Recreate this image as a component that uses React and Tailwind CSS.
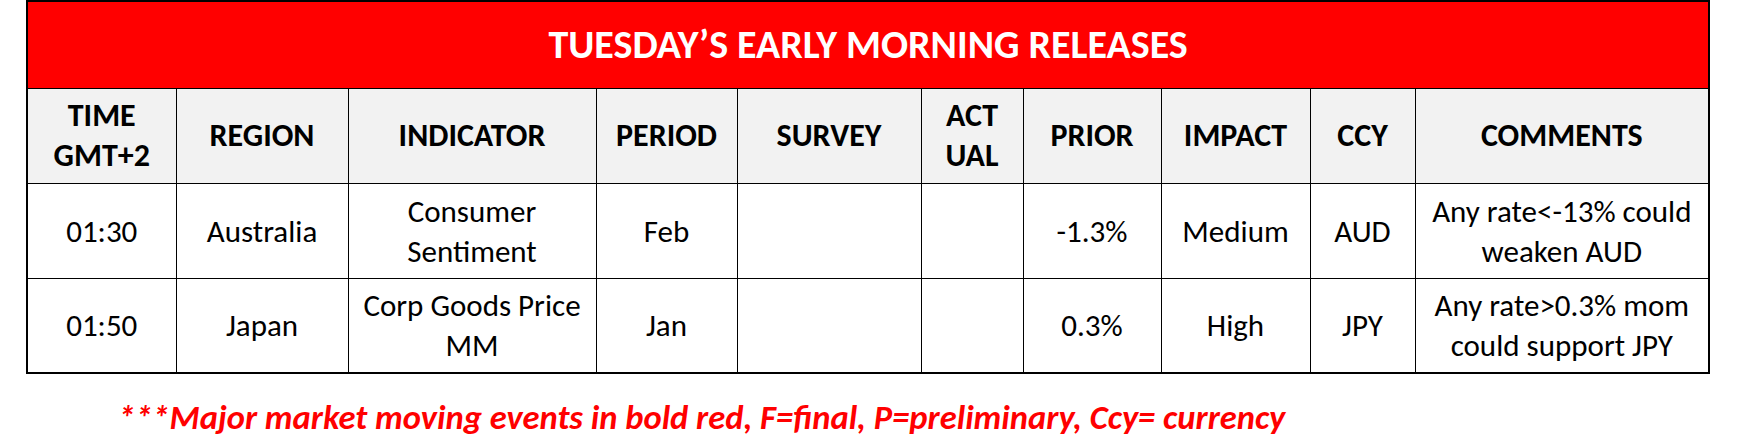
const columns = [
  { key: "time", label: ["TIME", "GMT+2"], width: "w-[149px]" },
  { key: "region", label: ["REGION"], width: "w-[172px]" },
  { key: "indicator", label: ["INDICATOR"], width: "w-[248px]" },
  { key: "period", label: ["PERIOD"], width: "w-[141px]" },
  { key: "survey", label: ["SURVEY"], width: "w-[184px]" },
  { key: "actual", label: ["ACT", "UAL"], width: "w-[102px]" },
  { key: "prior", label: ["PRIOR"], width: "w-[138px]" },
  { key: "impact", label: ["IMPACT"], width: "w-[149px]" },
  { key: "ccy", label: ["CCY"], width: "w-[105px]" },
  { key: "comments", label: ["COMMENTS"], width: "w-[294px]" },
];

const releases = [
  {
    time: "01:30",
    region: "Australia",
    indicator: ["Consumer", "Sentiment"],
    period: "Feb",
    survey: "",
    actual: "",
    prior: "-1.3%",
    impact: "Medium",
    ccy: "AUD",
    comments: ["Any rate<-13% could", "weaken AUD"],
  },
  {
    time: "01:50",
    region: "Japan",
    indicator: ["Corp Goods Price", "MM"],
    period: "Jan",
    survey: "",
    actual: "",
    prior: "0.3%",
    impact: "High",
    ccy: "JPY",
    comments: ["Any rate>0.3% mom", "could support JPY"],
  },
];

const renderLines = (value) => {
  if (Array.isArray(value)) {
    return value.map((line, i) => <div key={i}>{line}</div>);
  }
  return value;
};

export default function App() {
  return (
    <div
      className="bg-white w-[1737px] h-[440px] pl-[26px] pt-0"
      style={{ fontFamily: "Carlito, Lato, sans-serif" }}
    >
      <table className="table-fixed border-collapse border-2 border-black w-[1682px] text-black">
        <colgroup>
          {columns.map((col) => (
            <col key={col.key} className={col.width} />
          ))}
        </colgroup>
        <thead>
          <tr>
            <th
              colSpan={columns.length}
              className="h-[87px] bg-[#ff0000] text-white text-[40px] font-bold text-center border border-black"
            >
              TUESDAY’S EARLY MORNING RELEASES
            </th>
          </tr>
          <tr>
            {columns.map((col) => (
              <th
                key={col.key}
                className="h-[95px] bg-[#f2f2f2] border border-black text-[32px] font-bold leading-[40px] text-center"
              >
                {renderLines(col.label)}
              </th>
            ))}
          </tr>
        </thead>
        <tbody>
          {releases.map((row) => (
            <tr key={row.time}>
              {columns.map((col) => (
                <td
                  key={col.key}
                  className="h-[95px] border border-black text-[31px] leading-[40px] text-center whitespace-nowrap"
                >
                  {renderLines(row[col.key])}
                </td>
              ))}
            </tr>
          ))}
        </tbody>
      </table>
      <p className="mt-[24px] pl-[92px] text-[34.5px] leading-[38px] font-bold italic text-[#ff0000] whitespace-nowrap">
        ***Major market moving events in bold red, F=final, P=preliminary, Ccy= currency
      </p>
    </div>
  );
}
